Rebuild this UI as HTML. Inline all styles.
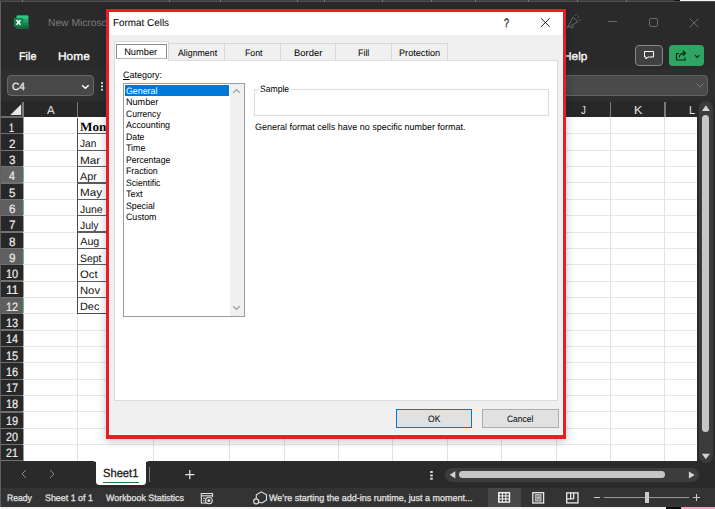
<!DOCTYPE html>
<html><head><meta charset="utf-8"><title>Format Cells</title>
<style>
*{box-sizing:border-box;margin:0;padding:0}
html,body{width:715px;height:509px;overflow:hidden;background:#262626;font-family:"Liberation Sans",sans-serif;}
.a{position:absolute}
.t{position:absolute;white-space:nowrap;line-height:1;transform-origin:0 0;text-rendering:geometricPrecision}
.gl{background:#e7e7e7}.gv{background:#e2e2e2}
</style></head><body>

<div class="a" style="left:0;top:0;width:715px;height:69px;background:#2a2a2a"></div>
<div class="a" style="left:0;top:0;width:715px;height:2px;background:#3f3f3f"></div>
<div class="a" style="left:0;top:1px;width:715px;height:1px;background:#4d4d4d"></div>
<div class="a" style="left:22.3px;top:0;width:1px;height:1.500px;background:#7a7a7a"></div>
<div class="a" style="left:169px;top:0;width:1px;height:1.500px;background:#7a7a7a"></div>
<div class="a" style="left:219.5px;top:0;width:1px;height:1.500px;background:#7a7a7a"></div>
<div class="a" style="left:296.5px;top:0;width:1px;height:1.500px;background:#7a7a7a"></div>
<div class="a" style="left:323.5px;top:0;width:1px;height:1.500px;background:#7a7a7a"></div>
<div class="a" style="left:382px;top:0;width:1px;height:1.500px;background:#7a7a7a"></div>
<div class="a" style="left:430.5px;top:0;width:1px;height:1.500px;background:#7a7a7a"></div>
<div class="a" style="left:474.5px;top:0;width:1px;height:1.500px;background:#7a7a7a"></div>
<div class="a" style="left:528.2px;top:0;width:1px;height:1.500px;background:#7a7a7a"></div>
<div class="a" style="left:577px;top:0;width:1px;height:1.500px;background:#7a7a7a"></div>
<div class="a" style="left:625.5px;top:0;width:1px;height:1.500px;background:#7a7a7a"></div>
<div class="a" style="left:674px;top:0;width:6px;height:1px;background:#111"></div>
<div class="a" style="left:680px;top:0;width:35px;height:1px;background:#f4f4f4"></div>
<div class="a" style="left:0;top:2px;width:1.200px;height:504.500px;background:#606060;z-index:4"></div>
<svg class="a" style="left:13px;top:14px" width="17" height="17" viewBox="0 0 17 17">
<rect x="3.700" y="1.400" width="11.600" height="13.700" rx="0.800" fill="#21a366"/>
<rect x="3.700" y="1.400" width="11.600" height="3.600" rx="0.800" fill="#2fc787"/>
<rect x="9.500" y="5" width="5.800" height="3.400" fill="#1fa463"/>
<rect x="3.700" y="8.300" width="11.600" height="3.400" fill="#15884a"/>
<rect x="3.700" y="11.600" width="11.600" height="3.500" rx="0.800" fill="#17653c"/>
<rect x="0.900" y="4" width="9.200" height="8.700" rx="0.900" fill="#15834a"/>
<path d="M3.500 6 L7.500 10.800 M7.500 6 L3.500 10.800" stroke="#fff" stroke-width="1.500" fill="none"/>
</svg>
<div class="t" style="left:48.04px;top:19.30px;font-size:10.2px;color:#7d7d7d;transform:scaleX(1.0078);">New Microso</div>
<div class="t" style="left:18.68px;top:52.30px;font-size:11.2px;color:#fff;transform:scaleX(0.9647);-webkit-text-stroke:0.3px #fff;">File</div>
<div class="t" style="left:57.70px;top:52.30px;font-size:11.2px;color:#fff;transform:scaleX(1.0643);-webkit-text-stroke:0.3px #fff;">Home</div>
<div class="t" style="left:562.80px;top:52.30px;font-size:11.2px;color:#fff;transform:scaleX(1.0636);-webkit-text-stroke:0.3px #fff;">Help</div>
<svg class="a" style="left:560px;top:2px" width="155" height="40" viewBox="0 0 155 40">
<g stroke="#6a6a6a" stroke-width="1" fill="none">
<path d="M7 26 L13 15.200 L18 19.600 Z M10.500 24.500 l0.800 1.800 l2 -0.800 l-0.600 -1.800 M15.500 14 l0.800 -1.500 M17.800 15.800 l1.500 -1.300 M19.300 18.300 l1.600 -0.300"/>
<path d="M48 19.500 h9"/>
<rect x="89.500" y="16.500" width="8" height="8" rx="1.500"/>
<path d="M129.500 16.500 l9 9 M138.500 16.500 l-9 9"/>
</g></svg>
<div class="a" style="left:635px;top:45px;width:28px;height:21px;border:1px solid #868686;border-radius:4px;background:#404040"></div>
<svg class="a" style="left:642px;top:49px" width="14" height="13" viewBox="0 0 14 13"><path d="M2.500 2.500 h9 v5.500 h-5.500 l-2 2 v-2 h-1.500 z" fill="none" stroke="#fff" stroke-width="1"/></svg>
<div class="a" style="left:669px;top:45px;width:35px;height:21px;border-radius:4px;background:#2ea562"></div>
<svg class="a" style="left:674px;top:48px" width="30" height="15" viewBox="0 0 30 15"><g fill="none" stroke="#0d2818" stroke-width="1.200"><path d="M5 5.500 h-2.500 v6.500 h8.500 v-2.500"/><path d="M5.200 9.500 c0.300 -3 2.500 -4.300 5.500 -4.300 M8.800 2.700 l2.700 2.500 l-2.700 2.500"/><path d="M21 7.200 l2.200 2.200 l2.200 -2.200"/></g></svg>
<div class="a" style="left:0;top:68.500px;width:715px;height:32.500px;background:#2e2e2e"></div>
<div class="a" style="left:7px;top:75px;width:87px;height:21px;border:1px solid #686868;border-radius:4px;background:#484848"></div>
<div class="t" style="left:12.02px;top:81.50px;font-size:10.5px;color:#f0f0f0;transform:scaleX(0.9647);-webkit-text-stroke:0.25px #f0f0f0;">C4</div>
<svg class="a" style="left:80px;top:83px" width="11" height="8" viewBox="0 0 11 8"><path d="M2.100 2.300 L5.400 5.300 L8.700 2.300" fill="none" stroke="#fff" stroke-width="1.500"/></svg>
<div class="a" style="left:101.200px;top:81.600px;width:2.100px;height:2.100px;border-radius:0.700px;background:#e6e6e6;box-shadow:0 3.350px 0 #e6e6e6,0 6.700px 0 #e6e6e6"></div>
<div class="a" style="left:540px;top:75px;width:168px;height:21px;border:1px solid #626262;border-radius:4px;background:#4a4a4a"></div>
<svg class="a" style="left:695px;top:82px" width="10" height="7" viewBox="0 0 10 7"><path d="M1.500 1.500 L5 5 L8.500 1.500" fill="none" stroke="#7c7c7c" stroke-width="1"/></svg>
<div class="a" style="left:0;top:101px;width:715px;height:360px;background:#fff"></div>
<div class="a" style="left:0;top:101px;width:715px;height:16px;background:#282828"></div>
<div class="a" style="left:0;top:101px;width:23px;height:360px;background:#282828"></div>
<svg class="a" style="left:9px;top:104px" width="13" height="12" viewBox="0 0 13 12"><path d="M12.200 0.300 V11 H1.300 Z" fill="#e8e8e8"/></svg>
<div class="a" style="left:0;top:116.400px;width:23px;height:1.400px;background:#6c6c6c"></div>
<div class="a" style="left:22.700px;top:117px;width:1.300px;height:344px;background:#9a9a9a"></div>
<div class="a" style="left:22.3px;top:101.500px;width:1.400px;height:15.500px;background:#7a7a7a"></div>
<div class="t" style="left:47.00px;top:104.50px;font-size:11.8px;color:#e6e6e6;transform:scaleX(0.9750);">A</div>
<div class="a" style="left:76.8px;top:101.500px;width:1.400px;height:15.500px;background:#7a7a7a"></div>
<div class="a" style="left:152.8px;top:101.500px;width:1.400px;height:15.500px;background:#7a7a7a"></div>
<div class="a" style="left:229.0px;top:101.500px;width:1.400px;height:15.500px;background:#7a7a7a"></div>
<div class="a" style="left:283.4px;top:101.500px;width:1.400px;height:15.500px;background:#7a7a7a"></div>
<div class="a" style="left:337.8px;top:101.500px;width:1.400px;height:15.500px;background:#7a7a7a"></div>
<div class="a" style="left:392.2px;top:101.500px;width:1.400px;height:15.500px;background:#7a7a7a"></div>
<div class="a" style="left:446.6px;top:101.500px;width:1.400px;height:15.500px;background:#7a7a7a"></div>
<div class="a" style="left:501.0px;top:101.500px;width:1.400px;height:15.500px;background:#7a7a7a"></div>
<div class="a" style="left:555.4px;top:101.500px;width:1.400px;height:15.500px;background:#7a7a7a"></div>
<div class="t" style="left:581.49px;top:104.50px;font-size:11.8px;color:#e6e6e6;transform:scaleX(0.8211);">J</div>
<div class="a" style="left:609.8px;top:101.500px;width:1.400px;height:15.500px;background:#7a7a7a"></div>
<div class="t" style="left:633.73px;top:104.50px;font-size:11.8px;color:#e6e6e6;transform:scaleX(1.0667);">K</div>
<div class="a" style="left:664.2px;top:101.500px;width:1.400px;height:15.500px;background:#7a7a7a"></div>
<div class="t" style="left:689.09px;top:104.50px;font-size:11.8px;color:#e6e6e6;transform:scaleX(0.9143);">L</div>
<div class="a" style="left:0;top:133.16px;width:23px;height:1.300px;background:#727272"></div>
<div class="a gl" style="left:23px;top:133.36px;width:674px;height:1px"></div>
<div class="t" style="left:9.14px;top:121.50px;font-size:12.2px;color:#ececec;transform:scaleX(0.7455);-webkit-text-stroke:0.2px #ececec;">1</div>
<div class="a" style="left:0;top:149.52px;width:23px;height:1.300px;background:#727272"></div>
<div class="a gl" style="left:23px;top:149.72px;width:674px;height:1px"></div>
<div class="t" style="left:8.52px;top:137.79px;font-size:12.2px;color:#ececec;transform:scaleX(0.9565);-webkit-text-stroke:0.2px #ececec;">2</div>
<div class="a" style="left:0;top:165.88px;width:23px;height:1.300px;background:#727272"></div>
<div class="a gl" style="left:23px;top:166.08px;width:674px;height:1px"></div>
<div class="t" style="left:8.52px;top:154.08px;font-size:12.2px;color:#ececec;transform:scaleX(0.9565);-webkit-text-stroke:0.2px #ececec;">3</div>
<div class="a" style="left:1px;top:167.08px;width:22px;height:15.56px;background:#646464"></div>
<div class="a" style="left:21.500px;top:167.08px;width:1.500px;height:15.56px;background:#2c8a57"></div>
<div class="a" style="left:0;top:182.24px;width:23px;height:1.300px;background:#727272"></div>
<div class="a gl" style="left:23px;top:182.44px;width:674px;height:1px"></div>
<div class="t" style="left:8.78px;top:170.37px;font-size:12.2px;color:#ececec;transform:scaleX(0.8800);-webkit-text-stroke:0.2px #ececec;">4</div>
<div class="a" style="left:0;top:198.60px;width:23px;height:1.300px;background:#727272"></div>
<div class="a gl" style="left:23px;top:198.80px;width:674px;height:1px"></div>
<div class="t" style="left:8.52px;top:186.66px;font-size:12.2px;color:#ececec;transform:scaleX(0.9565);-webkit-text-stroke:0.2px #ececec;">5</div>
<div class="a" style="left:1px;top:199.80px;width:22px;height:15.56px;background:#5f5f5f"></div>
<div class="a" style="left:21.500px;top:199.80px;width:1.500px;height:15.56px;background:#2c8a57"></div>
<div class="a" style="left:0;top:214.96px;width:23px;height:1.300px;background:#727272"></div>
<div class="a gl" style="left:23px;top:215.16px;width:674px;height:1px"></div>
<div class="t" style="left:8.52px;top:202.95px;font-size:12.2px;color:#ececec;transform:scaleX(0.9565);-webkit-text-stroke:0.2px #ececec;">6</div>
<div class="a" style="left:0;top:231.32px;width:23px;height:1.300px;background:#727272"></div>
<div class="a gl" style="left:23px;top:231.52px;width:674px;height:1px"></div>
<div class="t" style="left:8.52px;top:219.24px;font-size:12.2px;color:#ececec;transform:scaleX(0.9565);-webkit-text-stroke:0.2px #ececec;">7</div>
<div class="a" style="left:0;top:247.68px;width:23px;height:1.300px;background:#727272"></div>
<div class="a gl" style="left:23px;top:247.88px;width:674px;height:1px"></div>
<div class="t" style="left:8.52px;top:235.53px;font-size:12.2px;color:#ececec;transform:scaleX(0.9565);-webkit-text-stroke:0.2px #ececec;">8</div>
<div class="a" style="left:1px;top:248.88px;width:22px;height:15.56px;background:#5f5f5f"></div>
<div class="a" style="left:21.500px;top:248.88px;width:1.500px;height:15.56px;background:#2c8a57"></div>
<div class="a" style="left:0;top:264.04px;width:23px;height:1.300px;background:#727272"></div>
<div class="a gl" style="left:23px;top:264.24px;width:674px;height:1px"></div>
<div class="t" style="left:8.52px;top:251.82px;font-size:12.2px;color:#ececec;transform:scaleX(0.9565);-webkit-text-stroke:0.2px #ececec;">9</div>
<div class="a" style="left:0;top:280.40px;width:23px;height:1.300px;background:#727272"></div>
<div class="a gl" style="left:23px;top:280.60px;width:674px;height:1px"></div>
<div class="t" style="left:5.93px;top:268.11px;font-size:12.2px;color:#ececec;transform:scaleX(0.8980);-webkit-text-stroke:0.2px #ececec;">10</div>
<div class="a" style="left:0;top:296.76px;width:23px;height:1.300px;background:#727272"></div>
<div class="a gl" style="left:23px;top:296.96px;width:674px;height:1px"></div>
<div class="t" style="left:5.87px;top:284.40px;font-size:12.2px;color:#ececec;transform:scaleX(0.9778);-webkit-text-stroke:0.2px #ececec;">11</div>
<div class="a" style="left:1px;top:297.96px;width:22px;height:15.56px;background:#5f5f5f"></div>
<div class="a" style="left:21.500px;top:297.96px;width:1.500px;height:15.56px;background:#2c8a57"></div>
<div class="a" style="left:0;top:313.12px;width:23px;height:1.300px;background:#727272"></div>
<div class="a gl" style="left:23px;top:313.32px;width:674px;height:1px"></div>
<div class="t" style="left:5.93px;top:300.69px;font-size:12.2px;color:#ececec;transform:scaleX(0.8980);-webkit-text-stroke:0.2px #ececec;">12</div>
<div class="a" style="left:0;top:329.48px;width:23px;height:1.300px;background:#727272"></div>
<div class="a gl" style="left:23px;top:329.68px;width:674px;height:1px"></div>
<div class="t" style="left:5.93px;top:316.98px;font-size:12.2px;color:#ececec;transform:scaleX(0.8980);-webkit-text-stroke:0.2px #ececec;">13</div>
<div class="a" style="left:0;top:345.84px;width:23px;height:1.300px;background:#727272"></div>
<div class="a gl" style="left:23px;top:346.04px;width:674px;height:1px"></div>
<div class="t" style="left:5.94px;top:333.27px;font-size:12.2px;color:#ececec;transform:scaleX(0.8800);-webkit-text-stroke:0.2px #ececec;">14</div>
<div class="a" style="left:0;top:362.20px;width:23px;height:1.300px;background:#727272"></div>
<div class="a gl" style="left:23px;top:362.40px;width:674px;height:1px"></div>
<div class="t" style="left:5.93px;top:349.56px;font-size:12.2px;color:#ececec;transform:scaleX(0.8980);-webkit-text-stroke:0.2px #ececec;">15</div>
<div class="a" style="left:0;top:378.56px;width:23px;height:1.300px;background:#727272"></div>
<div class="a gl" style="left:23px;top:378.76px;width:674px;height:1px"></div>
<div class="t" style="left:5.93px;top:365.85px;font-size:12.2px;color:#ececec;transform:scaleX(0.8980);-webkit-text-stroke:0.2px #ececec;">16</div>
<div class="a" style="left:0;top:394.92px;width:23px;height:1.300px;background:#727272"></div>
<div class="a gl" style="left:23px;top:395.12px;width:674px;height:1px"></div>
<div class="t" style="left:5.93px;top:382.14px;font-size:12.2px;color:#ececec;transform:scaleX(0.8980);-webkit-text-stroke:0.2px #ececec;">17</div>
<div class="a" style="left:0;top:411.28px;width:23px;height:1.300px;background:#727272"></div>
<div class="a gl" style="left:23px;top:411.48px;width:674px;height:1px"></div>
<div class="t" style="left:5.93px;top:398.43px;font-size:12.2px;color:#ececec;transform:scaleX(0.8980);-webkit-text-stroke:0.2px #ececec;">18</div>
<div class="a" style="left:0;top:427.64px;width:23px;height:1.300px;background:#727272"></div>
<div class="a gl" style="left:23px;top:427.84px;width:674px;height:1px"></div>
<div class="t" style="left:5.93px;top:414.72px;font-size:12.2px;color:#ececec;transform:scaleX(0.8980);-webkit-text-stroke:0.2px #ececec;">19</div>
<div class="a" style="left:0;top:444.00px;width:23px;height:1.300px;background:#727272"></div>
<div class="a gl" style="left:23px;top:444.20px;width:674px;height:1px"></div>
<div class="t" style="left:6.16px;top:431.01px;font-size:12.2px;color:#ececec;transform:scaleX(0.8800);-webkit-text-stroke:0.2px #ececec;">20</div>
<div class="a" style="left:0;top:460.36px;width:23px;height:1.300px;background:#727272"></div>
<div class="a gl" style="left:23px;top:460.56px;width:674px;height:1px"></div>
<div class="t" style="left:6.16px;top:447.30px;font-size:12.2px;color:#ececec;transform:scaleX(0.8800);-webkit-text-stroke:0.2px #ececec;">21</div>
<div class="a gv" style="left:77.0px;top:117px;width:1px;height:344px"></div>
<div class="a gv" style="left:153.0px;top:117px;width:1px;height:344px"></div>
<div class="a gv" style="left:229.2px;top:117px;width:1px;height:344px"></div>
<div class="a gv" style="left:283.6px;top:117px;width:1px;height:344px"></div>
<div class="a gv" style="left:338.0px;top:117px;width:1px;height:344px"></div>
<div class="a gv" style="left:392.4px;top:117px;width:1px;height:344px"></div>
<div class="a gv" style="left:446.8px;top:117px;width:1px;height:344px"></div>
<div class="a gv" style="left:501.2px;top:117px;width:1px;height:344px"></div>
<div class="a gv" style="left:555.6px;top:117px;width:1px;height:344px"></div>
<div class="a gv" style="left:610.0px;top:117px;width:1px;height:344px"></div>
<div class="a gv" style="left:664.4px;top:117px;width:1px;height:344px"></div>
<div class="a" style="left:77px;top:117.50px;width:77px;height:196.62px;border:1.200px solid #4a4a4a;border-top:none"></div>
<div class="t" style="left:80.34px;top:120.80px;font-size:12.6px;color:#000;font-family:'Liberation Serif',serif;font-weight:bold;transform:scaleX(1.0505);">Mon</div>
<div class="a" style="left:77px;top:133.26px;width:77px;height:1.200px;background:#5c5c5c"></div>
<div class="t" style="left:80.30px;top:139.49px;font-size:10.7px;color:#111;transform:scaleX(0.9493);">Jan</div>
<div class="a" style="left:77px;top:149.62px;width:77px;height:1.200px;background:#5c5c5c"></div>
<div class="t" style="left:80.30px;top:155.78px;font-size:10.7px;color:#111;transform:scaleX(1.1014);">Mar</div>
<div class="a" style="left:77px;top:165.98px;width:77px;height:1.200px;background:#5c5c5c"></div>
<div class="t" style="left:80.30px;top:172.07px;font-size:10.7px;color:#111;transform:scaleX(1.0121);">Apr</div>
<div class="a" style="left:77px;top:182.34px;width:77px;height:1.200px;background:#5c5c5c"></div>
<div class="t" style="left:80.30px;top:188.36px;font-size:10.7px;color:#111;transform:scaleX(1.0914);">May</div>
<div class="a" style="left:77px;top:198.70px;width:77px;height:1.200px;background:#5c5c5c"></div>
<div class="t" style="left:80.30px;top:204.65px;font-size:10.7px;color:#111;transform:scaleX(0.9714);">June</div>
<div class="a" style="left:77px;top:215.06px;width:77px;height:1.200px;background:#5c5c5c"></div>
<div class="t" style="left:80.30px;top:220.94px;font-size:10.7px;color:#111;transform:scaleX(0.9737);">July</div>
<div class="a" style="left:77px;top:231.42px;width:77px;height:1.200px;background:#5c5c5c"></div>
<div class="t" style="left:80.30px;top:237.23px;font-size:10.7px;color:#111;">Aug</div>
<div class="a" style="left:77px;top:247.78px;width:77px;height:1.200px;background:#5c5c5c"></div>
<div class="t" style="left:80.30px;top:253.52px;font-size:10.7px;color:#111;transform:scaleX(0.9773);">Sept</div>
<div class="a" style="left:77px;top:264.14px;width:77px;height:1.200px;background:#5c5c5c"></div>
<div class="t" style="left:80.30px;top:269.81px;font-size:10.7px;color:#111;transform:scaleX(1.0567);">Oct</div>
<div class="a" style="left:77px;top:280.50px;width:77px;height:1.200px;background:#5c5c5c"></div>
<div class="t" style="left:80.30px;top:286.10px;font-size:10.7px;color:#111;transform:scaleX(1.0526);">Nov</div>
<div class="a" style="left:77px;top:296.86px;width:77px;height:1.200px;background:#5c5c5c"></div>
<div class="t" style="left:80.30px;top:302.39px;font-size:10.7px;color:#111;transform:scaleX(1.0187);">Dec</div>
<div class="a" style="left:697px;top:100px;width:18px;height:362px;background:#2a2a2a"></div>
<div class="a" style="left:698.500px;top:100.700px;width:14.200px;height:362.600px;border-radius:7px;background:#3c3c3c;z-index:2"></div>
<div class="a" style="left:702.300px;top:115.300px;width:7.200px;height:316.400px;border-radius:3.600px;background:#c6c6c6;z-index:3"></div>
<svg class="a" style="left:701px;top:104px;z-index:3" width="10" height="8" viewBox="0 0 10 8"><path d="M4.900 1.300 L8.900 7 H0.900 Z" fill="#d4d4d4"/></svg>
<svg class="a" style="left:701px;top:453px;z-index:3" width="10" height="8" viewBox="0 0 10 8"><path d="M4.800 6.300 L8.800 0.700 H0.800 Z" fill="#d4d4d4"/></svg>
<div class="a" style="left:0;top:461.300px;width:96.300px;height:27px;background:#2a2a2a;border-top-right-radius:3.500px"></div>
<div class="a" style="left:146px;top:461.300px;width:569px;height:27px;background:#2a2a2a;border-top-left-radius:3.500px"></div>
<div class="a" style="left:96px;top:484.800px;width:51px;height:4px;background:#2a2a2a"></div>
<svg class="a" style="left:18px;top:468px" width="40" height="12" viewBox="0 0 40 12"><g fill="none" stroke="#8a8a8a" stroke-width="1"><path d="M8 2 L4 6 L8 10"/><path d="M32 2 L36 6 L32 10"/></g></svg>
<div class="a" style="left:96.200px;top:461px;width:49.800px;height:23.900px;background:#fff;border-radius:0 0 3.500px 3.500px"></div>
<div class="t" style="left:103.33px;top:467.80px;font-size:11.8px;color:#111;transform:scaleX(0.9452);-webkit-text-stroke:0.25px #111;">Sheet1</div>
<div class="a" style="left:103.400px;top:481.600px;width:35.300px;height:1.600px;background:#16803c"></div>
<div class="a" style="left:149px;top:467.200px;width:1px;height:15px;background:#777"></div>
<svg class="a" style="left:183px;top:468px" width="13" height="13" viewBox="0 0 13 13"><path d="M6.800 2 V11.200 M2.200 6.600 H11.400" stroke="#e4e4e4" stroke-width="1.200"/></svg>
<div class="a" style="left:430.300px;top:471px;width:2.400px;height:2.200px;border-radius:1px;background:#ddd;box-shadow:0 3.400px 0 #ddd,0 6.800px 0 #ddd"></div>
<div class="a" style="left:445.300px;top:468px;width:253.800px;height:13.500px;border-radius:7px;background:#3c3c3c"></div>
<div class="a" style="left:459.200px;top:471.200px;width:205.600px;height:7.200px;border-radius:3.600px;background:#c6c6c6"></div>
<svg class="a" style="left:449px;top:470px" width="8" height="10" viewBox="0 0 8 10"><path d="M0.700 4.800 L6.300 1.200 V8.400 Z" fill="#d4d4d4"/></svg>
<svg class="a" style="left:688px;top:470px" width="8" height="10" viewBox="0 0 8 10"><path d="M6.700 5 L0.900 1.500 V8.500 Z" fill="#d4d4d4"/></svg>
<div class="a" style="left:0;top:488px;width:715px;height:18.500px;background:#333"></div>
<div class="a" style="left:0;top:506.500px;width:715px;height:2.500px;background:#f2f2f2"></div>
<div class="a" style="left:666px;top:506.500px;width:14.500px;height:2.500px;background:#0c0c0c"></div>
<div class="a" style="left:680.500px;top:506.500px;width:34.500px;height:2.500px;background:#f5a3c4"></div>
<div class="t" style="left:6.81px;top:494.30px;font-size:9.3px;color:#e4e4e4;transform:scaleX(0.9257);-webkit-text-stroke:0.25px #e4e4e4;">Ready</div>
<div class="t" style="left:45.02px;top:494.30px;font-size:9.3px;color:#e4e4e4;transform:scaleX(0.9563);-webkit-text-stroke:0.25px #e4e4e4;">Sheet 1 of 1</div>
<div class="t" style="left:105.50px;top:494.30px;font-size:9.3px;color:#e4e4e4;transform:scaleX(0.9563);-webkit-text-stroke:0.25px #e4e4e4;">Workbook Statistics</div>
<div class="t" style="left:268.50px;top:494.30px;font-size:9.3px;color:#e4e4e4;transform:scaleX(0.9662);-webkit-text-stroke:0.25px #e4e4e4;">We’re starting the add-ins runtime, just a moment...</div>
<svg class="a" style="left:199px;top:491px" width="16" height="14" viewBox="0 0 16 14"><g fill="none" stroke="#e4e4e4" stroke-width="1.100"><path d="M7 12 H2.300 V2.500 H13.600 V6"/><path d="M2.300 4.800 H13.600"/><path d="M4 7.300 H6.500 M4 9.600 H5.500" stroke-width="0.900"/><circle cx="9.900" cy="9.500" r="3.300"/></g><circle cx="9.900" cy="9.500" r="1.500" fill="#e4e4e4"/></svg>
<svg class="a" style="left:252px;top:490px" width="17" height="16" viewBox="0 0 17 16"><g fill="none" stroke="#e4e4e4" stroke-width="1.100"><path d="M4.300 8.600 V4.800 L9.300 1.800 L14.500 4.800 V10 L10 13 L7 12.200"/><circle cx="4.200" cy="11.400" r="2.500"/></g></svg>
<div class="a" style="left:487.500px;top:488px;width:33.500px;height:18.500px;background:#474747"></div>
<svg class="a" style="left:497px;top:491px" width="15" height="13" viewBox="0 0 15 13"><rect x="1" y="1" width="12.200" height="10.800" fill="#f0f0f0"/><g fill="#3a3a3a"><rect x="2.600" y="2.500" width="2.300" height="1.900"/><rect x="6" y="2.500" width="2.300" height="1.900"/><rect x="9.400" y="2.500" width="2.300" height="1.900"/><rect x="2.600" y="5.500" width="2.300" height="1.900"/><rect x="6" y="5.500" width="2.300" height="1.900"/><rect x="9.400" y="5.500" width="2.300" height="1.900"/><rect x="2.600" y="8.500" width="2.300" height="1.900"/><rect x="6" y="8.500" width="2.300" height="1.900"/><rect x="9.400" y="8.500" width="2.300" height="1.900"/></g></svg>
<svg class="a" style="left:531px;top:491px" width="15" height="14" viewBox="0 0 15 14"><rect x="1.800" y="1.700" width="10.800" height="10.300" fill="none" stroke="#ececec" stroke-width="1.300"/><rect x="4.300" y="3.600" width="5.800" height="6.500" fill="#8e8e8e" stroke="#c8c8c8" stroke-width="0.900"/><path d="M5.800 6.800 H8.600" stroke="#eee" stroke-width="0.900"/></svg>
<svg class="a" style="left:565px;top:491px" width="15" height="14" viewBox="0 0 15 14"><g fill="none" stroke="#ececec" stroke-width="1.300"><rect x="1.700" y="1.900" width="11.300" height="10"/><path d="M5.700 1.900 V7.800 M8.700 1.900 V7.800 M1.700 7.800 H8.700"/></g></svg>
<div class="a" style="left:594px;top:497px;width:6px;height:1px;background:#ccc"></div>
<div class="a" style="left:604px;top:497px;width:85px;height:1px;background:#999"></div>
<div class="a" style="left:645px;top:492px;width:4px;height:11px;background:#ccc"></div>
<svg class="a" style="left:692px;top:493px" width="9" height="9" viewBox="0 0 9 9"><path d="M4.500 1 V8 M1 4.500 H8" stroke="#ccc" stroke-width="1"/></svg>
<div class="a" style="left:105.800px;top:8.800px;width:460.400px;height:430.200px;background:#ed1c24;box-shadow:0 2px 8px 1px rgba(0,0,0,.2)"></div>
<div class="a" style="left:109.400px;top:12.100px;width:453.600px;height:423.300px;background:#f0f0f0;border-left:1px solid #fafafa;border-right:1px solid #fafafa"></div>
<div class="a" style="left:109.400px;top:433.600px;width:453.600px;height:1.800px;background:#f8f8f8"></div>
<div class="a" style="left:109.400px;top:12.100px;width:453.600px;height:23.300px;background:#fff"></div>
<div class="t" style="left:113.37px;top:19.00px;font-size:10.1px;color:#000;transform:scaleX(0.9796);">Format Cells</div>
<div class="t" style="left:504.13px;top:16.80px;font-size:12.2px;color:#222;transform:scaleX(0.7333);-webkit-text-stroke:0.35px #222;">?</div>
<svg class="a" style="left:540px;top:17px" width="11" height="11" viewBox="0 0 11 11"><path d="M1 1.300 L9.700 9.800 M9.700 1.300 L1 9.800" stroke="#222" stroke-width="1"/></svg>
<div class="a" style="left:168.5px;top:43.300px;width:56.5px;height:17px;border-right:1px solid #d9d9d9;border-top:1px solid #d9d9d9;background:#f0f0f0"></div>
<div class="t" style="left:177.80px;top:48.60px;font-size:9.3px;color:#000;transform:scaleX(0.9455);">Alignment</div>
<div class="a" style="left:225px;top:43.300px;width:55.6px;height:17px;border-right:1px solid #d9d9d9;border-top:1px solid #d9d9d9;background:#f0f0f0"></div>
<div class="t" style="left:244.79px;top:48.60px;font-size:9.3px;color:#000;transform:scaleX(0.9408);">Font</div>
<div class="a" style="left:280.6px;top:43.300px;width:55.6px;height:17px;border-right:1px solid #d9d9d9;border-top:1px solid #d9d9d9;background:#f0f0f0"></div>
<div class="t" style="left:293.94px;top:48.60px;font-size:9.3px;color:#000;transform:scaleX(1.0148);">Border</div>
<div class="a" style="left:336.2px;top:43.300px;width:55.5px;height:17px;border-right:1px solid #d9d9d9;border-top:1px solid #d9d9d9;background:#f0f0f0"></div>
<div class="t" style="left:357.99px;top:48.60px;font-size:9.3px;color:#000;transform:scaleX(0.9524);">Fill</div>
<div class="a" style="left:391.7px;top:43.300px;width:56.3px;height:17px;border-right:1px solid #d9d9d9;border-top:1px solid #d9d9d9;background:#f0f0f0"></div>
<div class="t" style="left:398.96px;top:48.60px;font-size:9.3px;color:#000;transform:scaleX(0.9827);">Protection</div>
<div class="a" style="left:113.600px;top:59.500px;width:444px;height:341.300px;background:#fff;border:1px solid #dcdcdc"></div>
<div class="a" style="left:113.600px;top:41px;width:55.700px;height:19.500px;background:#fff;border:1px solid #d9d9d9;border-bottom:none"></div>
<div class="a" style="left:116px;top:44.200px;width:51px;height:14.600px;border:1px solid #8a8a8a;border-bottom-color:#b5b5b5"></div>
<div class="t" style="left:124.15px;top:48.00px;font-size:9.3px;color:#000;">Number</div>
<div class="t" style="left:123.20px;top:71.30px;font-size:9.3px;color:#000;transform:scaleX(0.9671);"><u>C</u>ategory:</div>
<div class="a" style="left:123px;top:83.300px;width:121.600px;height:234px;background:#fff;border:1px solid #979ba3"></div>
<div class="a" style="left:229.600px;top:84.300px;width:14px;height:232px;background:#f0f0f0"></div>
<svg class="a" style="left:232px;top:88px" width="9" height="6" viewBox="0 0 9 6"><path d="M1.200 4.800 L4.500 1.600 L7.800 4.800" fill="none" stroke="#9c9c9c" stroke-width="1.250"/></svg>
<svg class="a" style="left:232px;top:305px" width="9" height="6" viewBox="0 0 9 6"><path d="M1.200 1.200 L4.500 4.400 L7.800 1.200" fill="none" stroke="#9c9c9c" stroke-width="1.250"/></svg>
<div class="a" style="left:124.800px;top:84.800px;width:104.200px;height:10.800px;background:#0078d7"></div>
<div class="t" style="left:126.30px;top:86.80px;font-size:9.3px;color:#fff;transform:scaleX(0.9477);">General</div>
<div class="t" style="left:126.30px;top:98.31px;font-size:9.3px;color:#000;transform:scaleX(0.9758);">Number</div>
<div class="t" style="left:126.30px;top:109.82px;font-size:9.3px;color:#000;transform:scaleX(0.9192);">Currency</div>
<div class="t" style="left:126.30px;top:121.33px;font-size:9.3px;color:#000;transform:scaleX(0.9582);">Accounting</div>
<div class="t" style="left:126.30px;top:132.84px;font-size:9.3px;color:#000;transform:scaleX(0.9403);">Date</div>
<div class="t" style="left:126.30px;top:144.35px;font-size:9.3px;color:#000;transform:scaleX(0.9550);">Time</div>
<div class="t" style="left:126.30px;top:155.86px;font-size:9.3px;color:#000;transform:scaleX(0.9312);">Percentage</div>
<div class="t" style="left:126.30px;top:167.37px;font-size:9.3px;color:#000;transform:scaleX(0.9455);">Fraction</div>
<div class="t" style="left:126.30px;top:178.88px;font-size:9.3px;color:#000;transform:scaleX(0.9243);">Scientific</div>
<div class="t" style="left:126.30px;top:190.39px;font-size:9.3px;color:#000;transform:scaleX(0.9706);">Text</div>
<div class="t" style="left:126.30px;top:201.90px;font-size:9.3px;color:#000;transform:scaleX(0.9433);">Special</div>
<div class="t" style="left:126.30px;top:213.41px;font-size:9.3px;color:#000;transform:scaleX(0.9492);">Custom</div>
<div class="a" style="left:254px;top:88.600px;width:295px;height:27.400px;border:1px solid #dcdcdc"></div>
<div class="a" style="left:258.500px;top:86px;width:32.500px;height:6px;background:#fff"></div>
<div class="t" style="left:260.14px;top:84.90px;font-size:9.3px;color:#000;transform:scaleX(0.9236);">Sample</div>
<div class="t" style="left:254.52px;top:123.20px;font-size:9.3px;color:#000;transform:scaleX(0.9652);">General format cells have no specific number format.</div>
<div class="a" style="left:396.200px;top:409px;width:76px;height:19.400px;background:#e1e1e1;border:1.500px solid #0078d7"></div>
<div class="t" style="left:427.84px;top:415.40px;font-size:9.3px;color:#000;transform:scaleX(0.9176);">OK</div>
<div class="a" style="left:482.300px;top:409px;width:76.500px;height:19.400px;background:#e1e1e1;border:1px solid #adadad"></div>
<div class="t" style="left:507.34px;top:415.40px;font-size:9.3px;color:#000;transform:scaleX(0.9107);">Cancel</div>
</body></html>
